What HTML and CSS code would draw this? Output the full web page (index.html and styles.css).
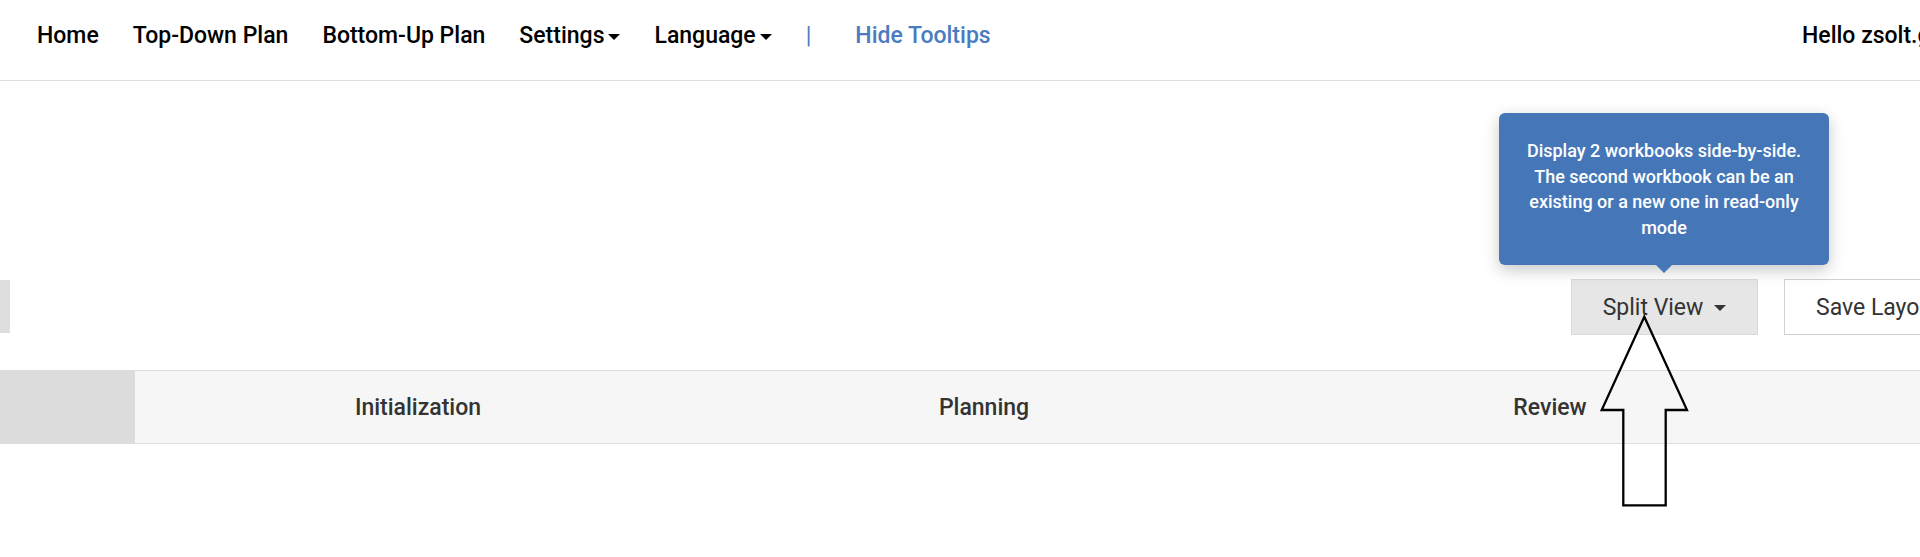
FILE: index.html
```html
<!DOCTYPE html>
<html lang="en">
<head>
<meta charset="utf-8">
<title>Workbook</title>
<link rel="stylesheet" href="styles.css">
</head>
<body>
<div class="page">
  <nav class="navbar">
    <ul class="nav-links">
      <li>Home</li>
      <li>Top-Down Plan</li>
      <li>Bottom-Up Plan</li>
      <li class="dropdown">Settings<span class="caret"></span></li>
      <li class="dropdown">Language<span class="caret"></span></li>
      <li class="sep">|</li>
      <li class="link-blue">Hide Tooltips</li>
    </ul>
    <div class="user">Hello zsolt.gulyas</div>
  </nav>

  <main class="content">
    <div class="toolbar">
      <div class="stub"></div>
      <div class="actions">
        <button class="btn btn-gray">Split View<span class="caret caret-btn"></span></button>
        <button class="btn btn-white">Save Layout</button>
      </div>
    </div>

    <div class="phases">
      <div class="phase-corner"></div>
      <div class="phase">Initialization</div>
      <div class="phase">Planning</div>
      <div class="phase">Review</div>
      <div class="phase"></div>
    </div>
  </main>

  <div class="tooltip">Display 2 workbooks side-by-side.<br>The second workbook can be an<br>existing or a new one in read-only<br>mode</div>

  <svg class="annotation" width="2100" height="557" viewBox="0 0 2100 557">
    <polygon points="1644.3,316.7 1687,410 1665.7,410 1665.7,505.3 1623.3,505.3 1623.3,410 1601.7,410" fill="none" stroke="#000" stroke-width="2.3" stroke-linejoin="miter"/>
  </svg>
</div>
</body>
</html>
```
FILE: styles.css
```css
html, body {
  margin: 0;
  padding: 0;
  overflow: hidden;
  background: #ffffff;
}

.page {
  position: relative;
  width: 2100px;
  height: 557px;
  font-family: Roboto, "Liberation Sans", Arial, sans-serif;
  color: #000;
}

/* ---------- navbar ---------- */
.navbar {
  display: flex;
  align-items: flex-start;
  height: 80px;
  border-bottom: 1px solid #e0e0e0;
  box-sizing: content-box;
  padding: 0 48px 0 37px;
}

.nav-links {
  display: flex;
  gap: 35px;
  list-style: none;
  margin: 0;
  padding: 23px 0 0 0;
  font-size: 23px;
  font-weight: 500;
  line-height: 26px;
}

.nav-links li {
  display: flex;
  align-items: center;
  white-space: nowrap;
}

.nav-links li:nth-child(-n+3) {
  margin-right: -1px;
}

.nav-links li:nth-child(4) {
  margin-right: -1px;
}

.caret {
  display: inline-block;
  width: 0;
  height: 0;
  margin-left: 4px;
  margin-top: 2px;
  border-top: 6px solid currentColor;
  border-left: 6px solid transparent;
  border-right: 6px solid transparent;
}

.sep {
  color: #4a7cbf;
  font-weight: 400;
  margin-left: -1px;
  padding-right: 9px;
}

.link-blue {
  color: #4a7cbf;
}

.user {
  margin-left: auto;
  width: 250px;
  padding-top: 23px;
  font-size: 23px;
  font-weight: 500;
  line-height: 26px;
  white-space: nowrap;
}

/* ---------- toolbar ---------- */
.content {
  display: flex;
  flex-direction: column;
}

.toolbar {
  display: flex;
  align-items: flex-start;
  margin-top: 198px;
  height: 56px;
  padding-right: 116px;
}

.stub {
  width: 10px;
  height: 53px;
  margin-top: 1px;
  background: #dedede;
}

.actions {
  display: flex;
  gap: 26px;
  margin-left: auto;
}

.btn {
  display: flex;
  align-items: center;
  justify-content: center;
  height: 56px;
  box-sizing: border-box;
  padding: 0;
  font-family: Roboto, "Liberation Sans", Arial, sans-serif;
  font-size: 23px;
  font-weight: 400;
  color: #333;
  border: 1px solid #d6d6d6;
  border-radius: 0;
  white-space: nowrap;
}

.btn-gray {
  width: 187px;
  background: #e6e6e6;
  border-color: #dadada;
}

.btn-white {
  width: 200px;
  justify-content: flex-start;
  padding-left: 31px;
  background: #ffffff;
  border-color: #d2d2d2;
}

.caret-btn {
  margin-left: 11px;
  margin-top: 2px;
  border-top-width: 6px;
  border-left-width: 6px;
  border-right-width: 6px;
  color: #333;
}

/* ---------- phase header ---------- */
.phases {
  display: grid;
  grid-template-columns: 135px repeat(3, 566px) 1fr;
  margin-top: 35px;
  height: 74px;
  box-sizing: border-box;
  border-top: 1.5px solid #dddddd;
  border-bottom: 1.5px solid #dddddd;
  background: #f6f6f6;
}

.phase-corner {
  background: #dcdcdc;
}

.phase {
  display: flex;
  align-items: center;
  justify-content: center;
  font-size: 23px;
  font-weight: 500;
  color: #333;
}

/* ---------- tooltip ---------- */
.tooltip {
  position: absolute;
  left: 1499px;
  top: 113px;
  width: 330px;
  height: 152px;
  box-sizing: border-box;
  padding: 25px 6px;
  background: #4577b8;
  color: #ffffff;
  border-radius: 6px;
  box-shadow: 0 5px 16px rgba(0, 0, 0, 0.22);
  font-size: 18px;
  font-weight: 500;
  line-height: 25.5px;
  text-align: center;
  white-space: nowrap;
}

.tooltip::after {
  content: "";
  position: absolute;
  left: 50%;
  bottom: -8px;
  margin-left: -8.5px;
  border-top: 8px solid #4577b8;
  border-left: 8.5px solid transparent;
  border-right: 8.5px solid transparent;
}

/* ---------- annotation arrow ---------- */
.annotation {
  position: absolute;
  left: 0;
  top: 0;
  pointer-events: none;
}
```
